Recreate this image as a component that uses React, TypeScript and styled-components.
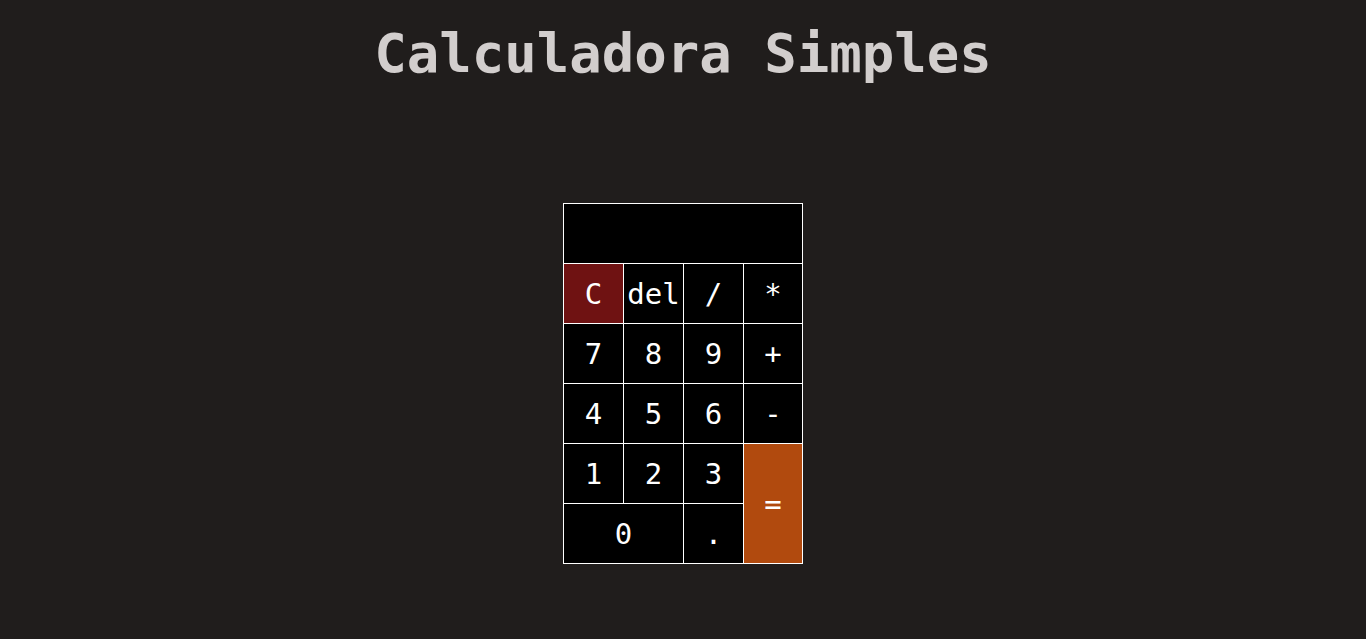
import styled, { createGlobalStyle } from "styled-components";

const GlobalStyle = createGlobalStyle`
  body {
    margin: 0;
    background-color: #201d1c;
    font-family: "DejaVu Sans Mono", "Liberation Mono", monospace;
  }
`;

const Page = styled.div`
  min-height: 639px;
  display: flex;
  flex-direction: column;
  align-items: center;
`;

const Title = styled.h1`
  margin: 20px 0 0;
  font-size: 54px;
  line-height: 68px;
  font-weight: bold;
  color: #d2cecd;
`;

const Calculator = styled.div`
  margin-top: 115px;
  display: grid;
  grid-template-columns: 59px 59px 59px 58px;
  grid-auto-rows: 59px;
  gap: 1px;
  padding: 1px;
  background-color: #ffffff;
`;

const Display = styled.div`
  grid-column: span 4;
  background-color: #000000;
  color: #ffffff;
  font-size: 30px;
  display: flex;
  align-items: center;
  justify-content: flex-end;
  padding: 0 8px;
`;

type Variant = "clear" | "equals" | "default";

const colors: Record<Variant, string> = {
  clear: "#6f1212",
  equals: "#b14a0e",
  default: "#000000",
};

const Key = styled.button<{ $variant?: Variant; $cols?: number; $rows?: number }>`
  grid-column: span ${(p) => p.$cols ?? 1};
  grid-row: span ${(p) => p.$rows ?? 1};
  border: none;
  padding: 0;
  background-color: ${(p) => colors[p.$variant ?? "default"]};
  color: #ffffff;
  font-family: inherit;
  font-size: 29px;
  display: flex;
  align-items: center;
  justify-content: center;
  overflow: visible;
  white-space: nowrap;
  cursor: pointer;
`;

export default function App() {
  return (
    <>
      <GlobalStyle />
      <Page>
        <Title>Calculadora Simples</Title>
        <Calculator>
          <Display />
          <Key $variant="clear">C</Key>
          <Key>del</Key>
          <Key>/</Key>
          <Key>*</Key>
          <Key>7</Key>
          <Key>8</Key>
          <Key>9</Key>
          <Key>+</Key>
          <Key>4</Key>
          <Key>5</Key>
          <Key>6</Key>
          <Key>-</Key>
          <Key>1</Key>
          <Key>2</Key>
          <Key>3</Key>
          <Key $variant="equals" $rows={2}>
            =
          </Key>
          <Key $cols={2}>0</Key>
          <Key>.</Key>
        </Calculator>
      </Page>
    </>
  );
}
